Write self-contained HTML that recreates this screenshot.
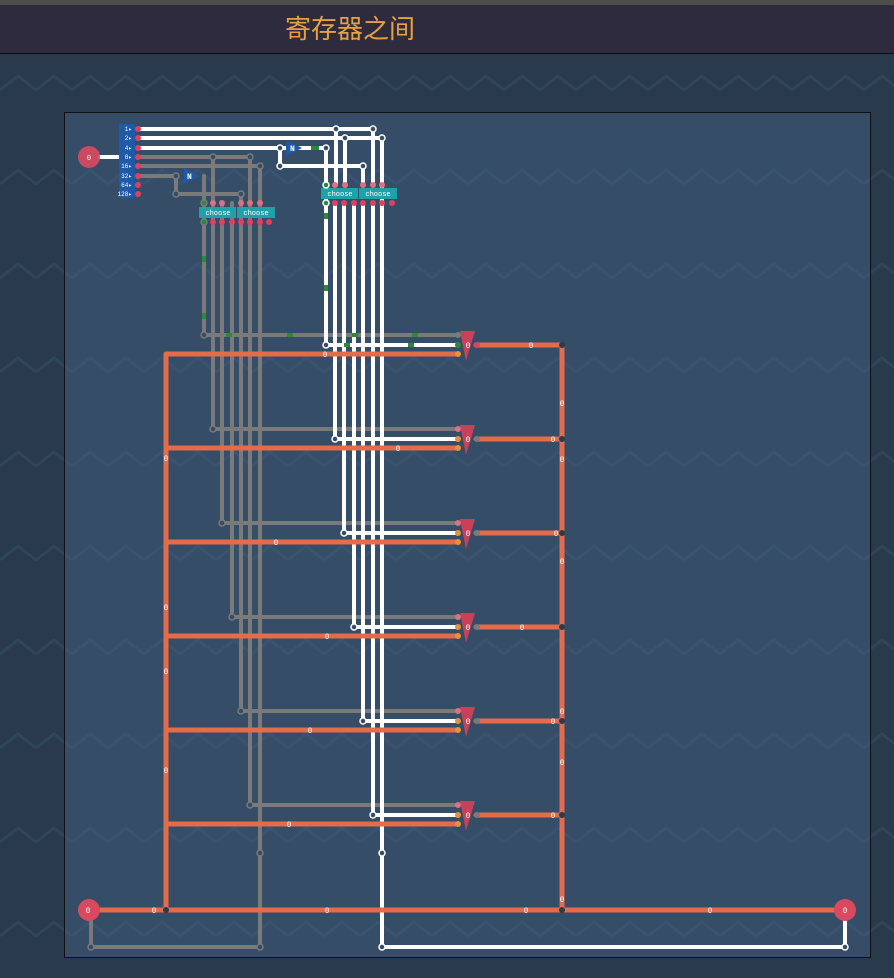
<!DOCTYPE html>
<html><head><meta charset="utf-8"><style>
html,body{margin:0;padding:0;width:894px;height:978px;overflow:hidden;background:#283a4c}
svg{display:block}
text{font-family:"Liberation Mono",monospace}
</style></head><body>
<svg width="894" height="978" viewBox="0 0 894 978" xmlns="http://www.w3.org/2000/svg">
<defs>
<pattern id="zz" width="36" height="94" patternUnits="userSpaceOnUse" y="66">
<polyline points="0,24 18,10 36,24" fill="none" stroke="#2f455a" stroke-width="3"/>
</pattern>
<pattern id="zz2" width="36" height="94" patternUnits="userSpaceOnUse" y="66">
<polyline points="0,24 18,10 36,24" fill="none" stroke="#3a5370" stroke-width="3"/>
</pattern>
</defs>
<rect x="0" y="0" width="894" height="978" fill="#283a4c"/>
<rect x="0" y="54" width="894" height="924" fill="url(#zz)"/>
<rect x="0" y="0" width="894" height="5" fill="#4f4d49"/>
<rect x="0" y="5" width="894" height="48" fill="#2e2b3e"/>
<rect x="0" y="53" width="894" height="1" fill="#0c0c10"/>
<text x="350" y="38" text-anchor="middle" font-size="26" fill="#e8a040" style="font-family:'Liberation Sans','Noto Sans CJK SC',sans-serif">寄存器之间</text>
<rect x="64.5" y="112.5" width="806" height="845" fill="#354d66" stroke="#111" stroke-width="1"/>
<rect x="65" y="113" width="805" height="844" fill="url(#zz2)"/>

<g stroke-linecap="round" fill="none">
<!-- gray wires -->
<g stroke="#7a7a7a" stroke-width="4">
<path d="M138 157H250M138 166H260M138 176H176M176 176V194H241M204 176V335M213 157V429M250 157V805M222 203V523M232 203V617M241 194V711M260 166V947H91V910"/>
<path d="M204 335H458M213 429H458M222 523H458M232 617H458M241 711H458M250 805H458"/>
</g>
<!-- white wires -->
<g stroke="#ffffff" stroke-width="4">
<path d="M138 129H373M138 138H382M138 148H326M280 148V166H363V185M336 129V185M345 138V185M373 129V185M382 138V947H845V910"/>
<path d="M326 148V345M335 203V439M344 203V533M354 203V627M363 203V721M373 203V815"/>
<path d="M326 345H458M335 439H458M344 533H458M354 627H458M363 721H458M373 815H458"/>
<path d="M100 157H120"/>
</g>
<!-- orange wires -->
<g stroke="#e56c4a" stroke-width="5">
<path d="M166 354H458M166 448H458M166 542H458M166 636H458M166 730H458M166 824H458M166 354V910"/>
<path d="M476 345H562M476 439H562M476 533H562M476 627H562M476 721H562M476 815H562M562 345V910M92 910H838"/>
</g>
</g>
<!-- green segments -->
<g stroke="#2a8a3a" stroke-width="4">
<path d="M204 256V262M204 313V319M326 213V219M326 285V291M311 148H319M226 335H232M287 335H293M352 335H358M412 335H418M344 345H350M408 345H414"/>
</g>
<!-- splitter -->
<path d="M119 124H135V198H119Z" fill="#1f5aa8"/>
<g font-size="6" fill="#fff" text-anchor="end">
<text x="132" y="131">1▸</text><text x="132" y="140">2▸</text><text x="132" y="150">4▸</text><text x="132" y="159">8▸</text><text x="132" y="168">16▸</text><text x="132" y="178">32▸</text><text x="132" y="187">64▸</text><text x="132" y="196">128▸</text>
</g>
<g fill="#e04060"><circle cx="138" cy="129" r="3"/><circle cx="138" cy="138" r="3"/><circle cx="138" cy="148" r="3"/><circle cx="138" cy="157" r="3"/><circle cx="138" cy="166" r="3"/><circle cx="138" cy="176" r="3"/><circle cx="138" cy="185" r="3"/><circle cx="138" cy="194" r="3"/></g>
<!-- input nodes -->
<circle cx="89" cy="157" r="11" fill="#d94a60" opacity="0.9"/>
<text x="89" y="160" font-size="7" fill="#fff" text-anchor="middle">0</text>
<circle cx="89" cy="910" r="11" fill="#d94a60"/><text x="88" y="913" font-size="8" fill="#fff" text-anchor="middle">0</text>
<circle cx="845" cy="910" r="11" fill="#d94a60"/><text x="845" y="913" font-size="8" fill="#fff" text-anchor="middle">0</text>
<!-- N gates -->
<path d="M286 140L302 148L286 156Z" fill="#1f5aa8"/><text x="290" y="151" font-size="8" fill="#fff" font-weight="bold">N</text>
<path d="M184 168L200 176L184 184Z" fill="#1f5aa8"/><text x="187" y="179" font-size="8" fill="#fff" font-weight="bold">N</text>
<!-- choose blocks -->
<g>
<rect x="199" y="207" width="37" height="11" fill="#20a0a8"/><rect x="237" y="207" width="38" height="11" fill="#20a0a8"/>
<rect x="321" y="188" width="37" height="11" fill="#20a0a8"/><rect x="359" y="188" width="38" height="11" fill="#20a0a8"/>
<g font-size="7" fill="#fff" text-anchor="middle"><text x="218" y="215">choose</text><text x="256" y="215">choose</text><text x="340" y="196">choose</text><text x="378" y="196">choose</text></g>
</g>
<g fill="#e07080"><circle cx="213" cy="203" r="3"/><circle cx="222" cy="203" r="3"/><circle cx="241" cy="203" r="3"/><circle cx="250" cy="203" r="3"/><circle cx="260" cy="203" r="3"/><circle cx="335" cy="185" r="3"/><circle cx="345" cy="185" r="3"/><circle cx="363" cy="185" r="3"/><circle cx="373" cy="185" r="3"/><circle cx="382" cy="185" r="3"/></g>
<g fill="#e04060"><circle cx="213" cy="222" r="3"/><circle cx="222" cy="222" r="3"/><circle cx="232" cy="222" r="3"/><circle cx="241" cy="222" r="3"/><circle cx="250" cy="222" r="3"/><circle cx="260" cy="222" r="3"/><circle cx="269" cy="222" r="3"/><circle cx="335" cy="203" r="3"/><circle cx="344" cy="203" r="3"/><circle cx="354" cy="203" r="3"/><circle cx="363" cy="203" r="3"/><circle cx="373" cy="203" r="3"/><circle cx="382" cy="203" r="3"/><circle cx="392" cy="203" r="3"/></g>
<g fill="#2a8a3a" stroke="#7a7a7a" stroke-width="1.5"><circle cx="204" cy="203" r="3"/><circle cx="204" cy="222" r="3"/></g>
<g fill="#2a8a3a" stroke="#fff" stroke-width="1.5"><circle cx="326" cy="185" r="3"/><circle cx="326" cy="203" r="3"/></g>
<!-- junction dots -->
<g fill="#354d66" stroke="#fff" stroke-width="1.5">
<circle cx="336" cy="129" r="3"/><circle cx="373" cy="129" r="3"/><circle cx="345" cy="138" r="3"/><circle cx="382" cy="138" r="3"/><circle cx="280" cy="148" r="3"/><circle cx="326" cy="148" r="3"/><circle cx="280" cy="166" r="3"/><circle cx="363" cy="166" r="3"/><circle cx="382" cy="853" r="3"/><circle cx="382" cy="947" r="3"/><circle cx="845" cy="947" r="3"/>
<circle cx="326" cy="345" r="3"/><circle cx="335" cy="439" r="3"/><circle cx="344" cy="533" r="3"/><circle cx="354" cy="627" r="3"/><circle cx="363" cy="721" r="3"/><circle cx="373" cy="815" r="3"/>
</g>
<g fill="#354d66" stroke="#7a7a7a" stroke-width="1.5">
<circle cx="213" cy="157" r="3"/><circle cx="250" cy="157" r="3"/><circle cx="260" cy="166" r="3"/><circle cx="176" cy="176" r="3"/><circle cx="176" cy="194" r="3"/><circle cx="241" cy="194" r="3"/><circle cx="260" cy="853" r="3"/><circle cx="260" cy="947" r="3"/><circle cx="91" cy="947" r="3"/>
<circle cx="204" cy="335" r="3"/><circle cx="213" cy="429" r="3"/><circle cx="222" cy="523" r="3"/><circle cx="232" cy="617" r="3"/><circle cx="241" cy="711" r="3"/><circle cx="250" cy="805" r="3"/>
</g>
<g fill="#2a3a50"><circle cx="562" cy="345" r="3"/><circle cx="562" cy="439" r="3"/><circle cx="562" cy="533" r="3"/><circle cx="562" cy="627" r="3"/><circle cx="562" cy="721" r="3"/><circle cx="562" cy="815" r="3"/><circle cx="562" cy="910" r="3"/><circle cx="166" cy="910" r="3"/></g>
<!-- registers -->
<g id="regs">
<g transform="translate(0,0)"><path d="M460 331H475L466 361Z" fill="#c8405a"/><text x="468" y="348" font-size="8" fill="#fff" text-anchor="middle">0</text></g>
<g transform="translate(0,94)"><path d="M460 331H475L466 361Z" fill="#c8405a"/><text x="468" y="348" font-size="8" fill="#fff" text-anchor="middle">0</text></g>
<g transform="translate(0,188)"><path d="M460 331H475L466 361Z" fill="#c8405a"/><text x="468" y="348" font-size="8" fill="#fff" text-anchor="middle">0</text></g>
<g transform="translate(0,282)"><path d="M460 331H475L466 361Z" fill="#c8405a"/><text x="468" y="348" font-size="8" fill="#fff" text-anchor="middle">0</text></g>
<g transform="translate(0,376)"><path d="M460 331H475L466 361Z" fill="#c8405a"/><text x="468" y="348" font-size="8" fill="#fff" text-anchor="middle">0</text></g>
<g transform="translate(0,470)"><path d="M460 331H475L466 361Z" fill="#c8405a"/><text x="468" y="348" font-size="8" fill="#fff" text-anchor="middle">0</text></g>
</g>
<g fill="#e8903a"><circle cx="458" cy="354" r="3"/><circle cx="458" cy="448" r="3"/><circle cx="458" cy="542" r="3"/><circle cx="458" cy="636" r="3"/><circle cx="458" cy="730" r="3"/><circle cx="458" cy="824" r="3"/>
<circle cx="458" cy="439" r="3"/><circle cx="458" cy="533" r="3"/><circle cx="458" cy="627" r="3"/><circle cx="458" cy="721" r="3"/><circle cx="458" cy="815" r="3"/></g>
<circle cx="458" cy="345" r="3" fill="#2a8a3a"/>
<g fill="#7a7a7a"><circle cx="458" cy="335" r="3"/></g>
<g fill="#e07080"><circle cx="458" cy="429" r="3"/><circle cx="458" cy="523" r="3"/><circle cx="458" cy="617" r="3"/><circle cx="458" cy="711" r="3"/><circle cx="458" cy="805" r="3"/></g>
<g fill="#e04060"><circle cx="477" cy="345" r="3"/></g>
<g fill="#7a7a7a"><circle cx="477" cy="439" r="3"/><circle cx="477" cy="533" r="3"/><circle cx="477" cy="627" r="3"/><circle cx="477" cy="721" r="3"/><circle cx="477" cy="815" r="3"/></g>
<!-- value labels -->
<g font-size="8" fill="#fff" text-anchor="middle">
<text x="325" y="357">0</text><text x="398" y="451">0</text><text x="276" y="545">0</text><text x="327" y="639">0</text><text x="310" y="733">0</text><text x="289" y="827">0</text>
<text x="166" y="461">0</text><text x="166" y="610">0</text><text x="166" y="674">0</text><text x="166" y="773">0</text>
<text x="531" y="348">0</text><text x="553" y="442">0</text><text x="556" y="536">0</text><text x="522" y="630">0</text><text x="553" y="724">0</text><text x="553" y="818">0</text>
<text x="562" y="406">0</text><text x="562" y="462">0</text><text x="562" y="564">0</text><text x="562" y="714">0</text><text x="562" y="765">0</text><text x="562" y="902">0</text>
<text x="154" y="913">0</text><text x="327" y="913">0</text><text x="526" y="913">0</text><text x="710" y="913">0</text>
</g>
</svg>
</body></html>
